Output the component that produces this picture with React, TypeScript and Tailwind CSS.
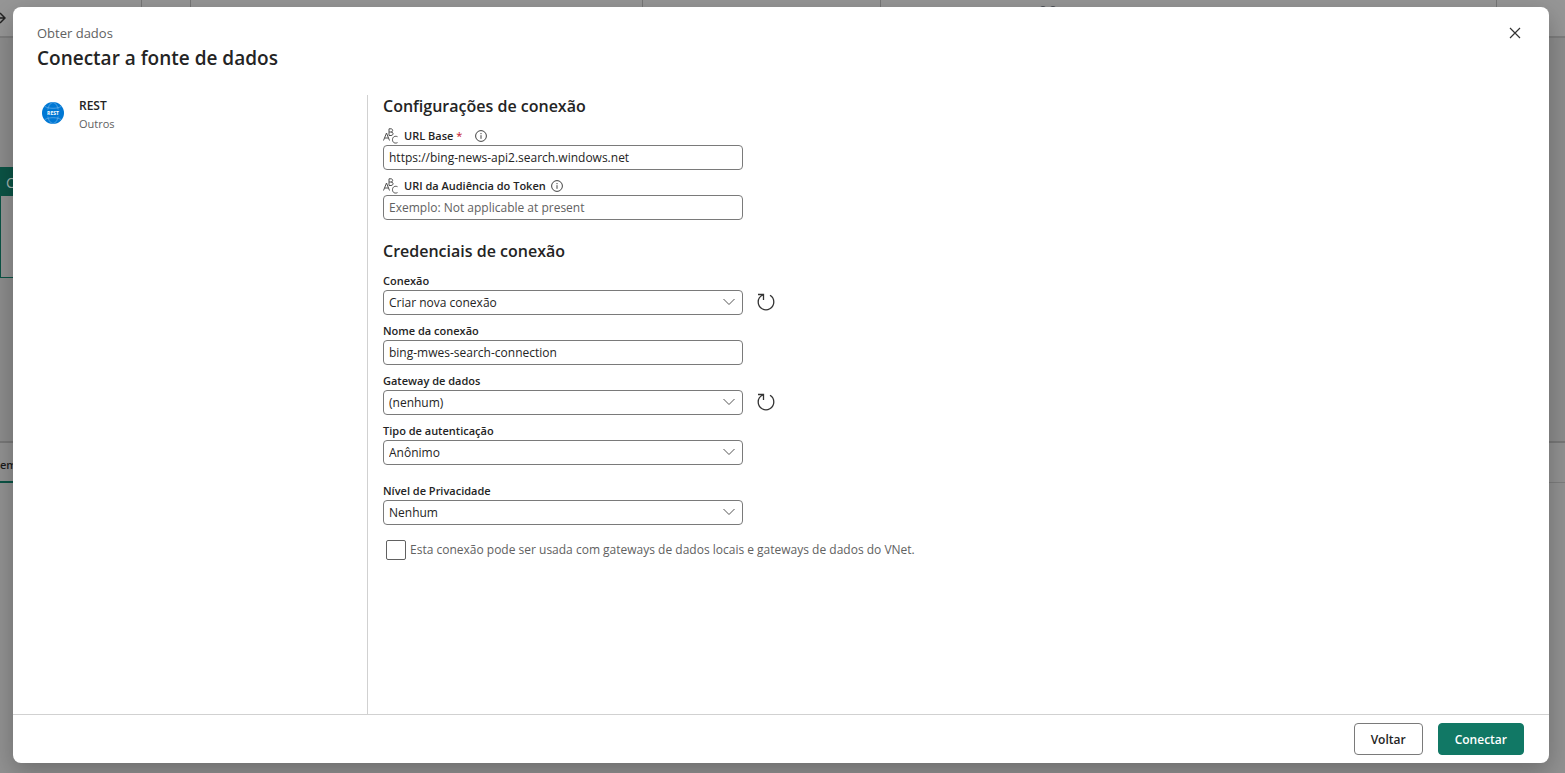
import { useState } from "react";
import type { ReactNode } from "react";

const inputClass =
  "block h-[25px] w-full rounded border border-[#7a7a7a] bg-white px-[5px] text-xs text-[#242424] outline-none placeholder:text-[#616161] focus:border-[#117865]";

function TextTypeIcon() {
  return (
    <svg className="size-4 shrink-0" viewBox="0 0 16 16" fill="none" stroke="#505050" strokeWidth="1" aria-hidden="true">
      <path d="M.5 12.500 3.500 5l3 7.500M1.600 10h3.800" />
      <path d="M6 .8v6.700h2c2.700 0 2.700-3.500.2-3.500H6M8 4c2.200 0 2.200-3.200 0-3.200H6" />
      <path d="M14.500 8.700c-2.200-1-5-.2-5 3s2.800 4 5 2.900" />
    </svg>
  );
}

function InfoIcon() {
  return (
    <svg className="size-3" viewBox="0 0 12 12" fill="none" stroke="#424242" strokeWidth="1" aria-hidden="true">
      <circle cx="6" cy="6" r="5.400" />
      <path d="M6 5.200v3.600M6 3v1.200" />
    </svg>
  );
}

function RefreshIcon() {
  return (
    <svg className="size-[18px]" viewBox="0 0 18 18" fill="none" stroke="#333" strokeWidth="1.300" aria-hidden="true">
      <path d="M1 1.500H6.500V7M6 2C3 3.200 1.200 6 1.200 9a7.800 7.800 0 1 0 11.800-6.700" />
    </svg>
  );
}

function RestLogo() {
  return (
    <svg className="size-[22px]" viewBox="0 0 22 22" aria-hidden="true">
      <circle cx="11" cy="11" r="11" fill="#0078d4" />
      <g fill="none" stroke="#5ea9e6" strokeWidth=".8">
        <ellipse cx="11" cy="11" rx="5.500" ry="10.500" />
        <path d="M3 4.500c4 2.400 12 2.400 16 0M3 17.500c4-2.400 12-2.400 16 0" />
      </g>
      <rect x="1" y="7.500" width="20" height="7" fill="#0078d4" />
      <text x="11" y="13" textAnchor="middle" fill="#fff" fontSize="5" fontWeight="700" fontFamily="Open Sans, sans-serif">
        REST
      </text>
    </svg>
  );
}

function Field({ id, label, children }: { id: string; label: string; children: ReactNode }) {
  return (
    <div className="flex flex-col">
      <label htmlFor={id} className="flex h-[25px] items-center pt-[6px] text-[11px] leading-4 font-semibold">
        {label}
      </label>
      {children}
    </div>
  );
}

function TypedField({
  id,
  label,
  required,
  ...rest
}: {
  id: string;
  label: string;
  required?: boolean;
  defaultValue?: string;
  placeholder?: string;
}) {
  return (
    <div className="flex flex-col">
      <div className="flex h-[25px] items-center gap-[5px] pt-[6px]">
        <TextTypeIcon />
        <label htmlFor={id} className="text-[11px] leading-4 font-semibold">
          {label}
          {required && <span className="pr-2 font-normal text-[#c50f1f]"> *</span>}
        </label>
        <button type="button" aria-label={`Informações sobre ${label}`}>
          <InfoIcon />
        </button>
      </div>
      <input id={id} type="text" required={required} className={inputClass} {...rest} />
    </div>
  );
}

function Select({ id, option, refresh }: { id: string; option: string; refresh?: boolean }) {
  return (
    <div className="flex h-[25px] items-center">
      <div className="relative w-full shrink-0">
        <select id={id} className={`${inputClass} appearance-none pr-8`}>
          <option>{option}</option>
        </select>
        <svg
          className="pointer-events-none absolute top-2 right-2 h-2 w-3"
          viewBox="0 0 12 8"
          fill="none"
          stroke="#555"
          aria-hidden="true"
        >
          <path d="M.5 1 6 6.500 11.500 1" />
        </svg>
      </div>
      {refresh && (
        <button type="button" aria-label="Atualizar" className="ml-3.5 shrink-0 pb-0.5">
          <RefreshIcon />
        </button>
      )}
    </div>
  );
}

function Workspace() {
  return (
    <div className="flex h-full flex-col" aria-hidden="true">
      <div className="flex h-[38px] shrink-0 items-center border-b-2 border-[#7d7d7d] bg-[#969696]">
        <svg className="h-3 w-[6px]" viewBox="0 0 6 12" fill="none" stroke="#222" strokeWidth="1.500">
          <path d="M0 6h5M0 1l5 5-5 5" />
        </svg>
        <div className="flex h-full flex-1">
          <div className="w-[136px] border-r border-[#777]" />
          <div className="w-[49px] border-r border-[#777]" />
          <div className="w-[452px] border-r border-[#777]" />
          <div className="w-[238px] border-r border-[#777]" />
          <div className="flex flex-1 justify-center gap-1 border-r border-[#777] pt-[6px] pr-[282px]">
            <span className="size-1.5 rounded-full bg-[#4a4f55]" />
            <span className="size-1.5 rounded-full bg-[#4a4f55]" />
          </div>
          <div className="w-[68px]" />
        </div>
      </div>
      <div className="flex flex-1 flex-col bg-[#8c8c8c] pt-[129px]">
        <div className="h-[111px] w-40 border border-[#0b5345] bg-[#929292]">
          <div className="h-7 bg-[#0b5345] pl-[5px] text-sm leading-[30px] text-[#a5b8b3]">Copiar dados</div>
        </div>
      </div>
      <div className="h-[332px] shrink-0 border-t-2 border-[#777] bg-[#919191]">
        <div className="flex h-10 border-b border-[#7d7d7d]">
          <div className="h-10 w-16 border-b-2 border-[#0b5345] text-[11px] leading-[44px] font-semibold text-[#1b1b1b]">
            em
          </div>
        </div>
      </div>
    </div>
  );
}

export default function App() {
  const [shared, setShared] = useState(false);
  return (
    <div className="relative h-screen overflow-hidden bg-[#8f8f8f] font-['Open_Sans',sans-serif] text-[#242424]">
      <Workspace />
      <div
        role="dialog"
        aria-modal="true"
        aria-labelledby="dialog-title"
        className="absolute top-[7px] right-4 bottom-[10px] left-[13px] flex flex-col rounded-lg bg-white shadow-[0_8px_24px_rgba(0,0,0,0.25)]"
      >
        <header className="flex shrink-0 items-start justify-between px-6 pt-4 pb-[14px]">
          <div>
            <p className="text-[13px] leading-5 text-[#616161]">Obter dados</p>
            <h1 id="dialog-title" className="text-[19px] leading-[30px] font-semibold">
              Conectar a fonte de dados
            </h1>
          </div>
          <button type="button" aria-label="Fechar" className="p-1">
            <svg className="size-3" viewBox="0 0 12 12" fill="none" stroke="#333" strokeWidth="1.200" aria-hidden="true">
              <path d="m1 1 10 10M11 1 1 11" />
            </svg>
          </button>
        </header>

        <div className="flex min-h-0 flex-1 pt-2">
          <aside className="flex w-[355px] shrink-0 items-start gap-[15px] border-r border-[#d1d1d1] pt-[2px] pl-[29px]">
            <div className="pt-[5px]">
              <RestLogo />
            </div>
            <div>
              <p className="text-xs leading-[18px] font-semibold">REST</p>
              <p className="text-[11px] leading-[18px] text-[#616161]">Outros</p>
            </div>
          </aside>

          <main className="min-w-0 flex-1 pl-[15px]">
            <form id="connection" className="w-[360px]">
              <h2 className="text-base leading-[22px] font-semibold">Configurações de conexão</h2>
              <div className="pt-[3px]">
                <TypedField id="base-url" label="URL Base" required defaultValue="https://bing-news-api2.search.windows.net" />
                <TypedField id="audience" label="URI da Audiência do Token" placeholder="Exemplo: Not applicable at present" />
              </div>

              <h2 className="pt-5 text-base leading-[22px] font-semibold">Credenciais de conexão</h2>
              <div className="pt-[3px]">
                <Field id="connection-kind" label="Conexão">
                  <Select id="connection-kind" option="Criar nova conexão" refresh />
                </Field>
                <Field id="connection-name" label="Nome da conexão">
                  <input id="connection-name" type="text" className={inputClass} defaultValue="bing-mwes-search-connection" />
                </Field>
                <Field id="gateway" label="Gateway de dados">
                  <Select id="gateway" option="(nenhum)" refresh />
                </Field>
                <Field id="auth" label="Tipo de autenticação">
                  <Select id="auth" option="Anônimo" />
                </Field>
                <div className="pt-[10px]">
                  <Field id="privacy" label="Nível de Privacidade">
                    <Select id="privacy" option="Nenhum" />
                  </Field>
                </div>
              </div>
            </form>
            <div className="flex items-center gap-1 pt-[15px] pl-[3px]">
              <input
                id="shared"
                type="checkbox"
                form="connection"
                checked={shared}
                onChange={(e) => setShared(e.target.checked)}
                className="size-5 appearance-none rounded-[2px] border border-[#616161] bg-white checked:bg-[#117865]"
              />
              <label htmlFor="shared" className="text-xs leading-5 text-[#616161]">
                Esta conexão pode ser usada com gateways de dados locais e gateways de dados do VNet.
              </label>
            </div>
          </main>
        </div>

        <footer className="flex shrink-0 justify-end gap-[15px] border-t border-[#d1d1d1] pt-2 pr-[25px] pb-2">
          <button type="button" className="h-8 rounded border border-[#7a7a7a] bg-white px-4 pt-0.5 text-xs font-semibold">
            Voltar
          </button>
          <button
            type="submit"
            form="connection"
            className="h-8 rounded border border-[#117865] bg-[#117865] px-4 pt-0.5 text-xs font-semibold text-white"
          >
            Conectar
          </button>
        </footer>
      </div>
    </div>
  );
}
